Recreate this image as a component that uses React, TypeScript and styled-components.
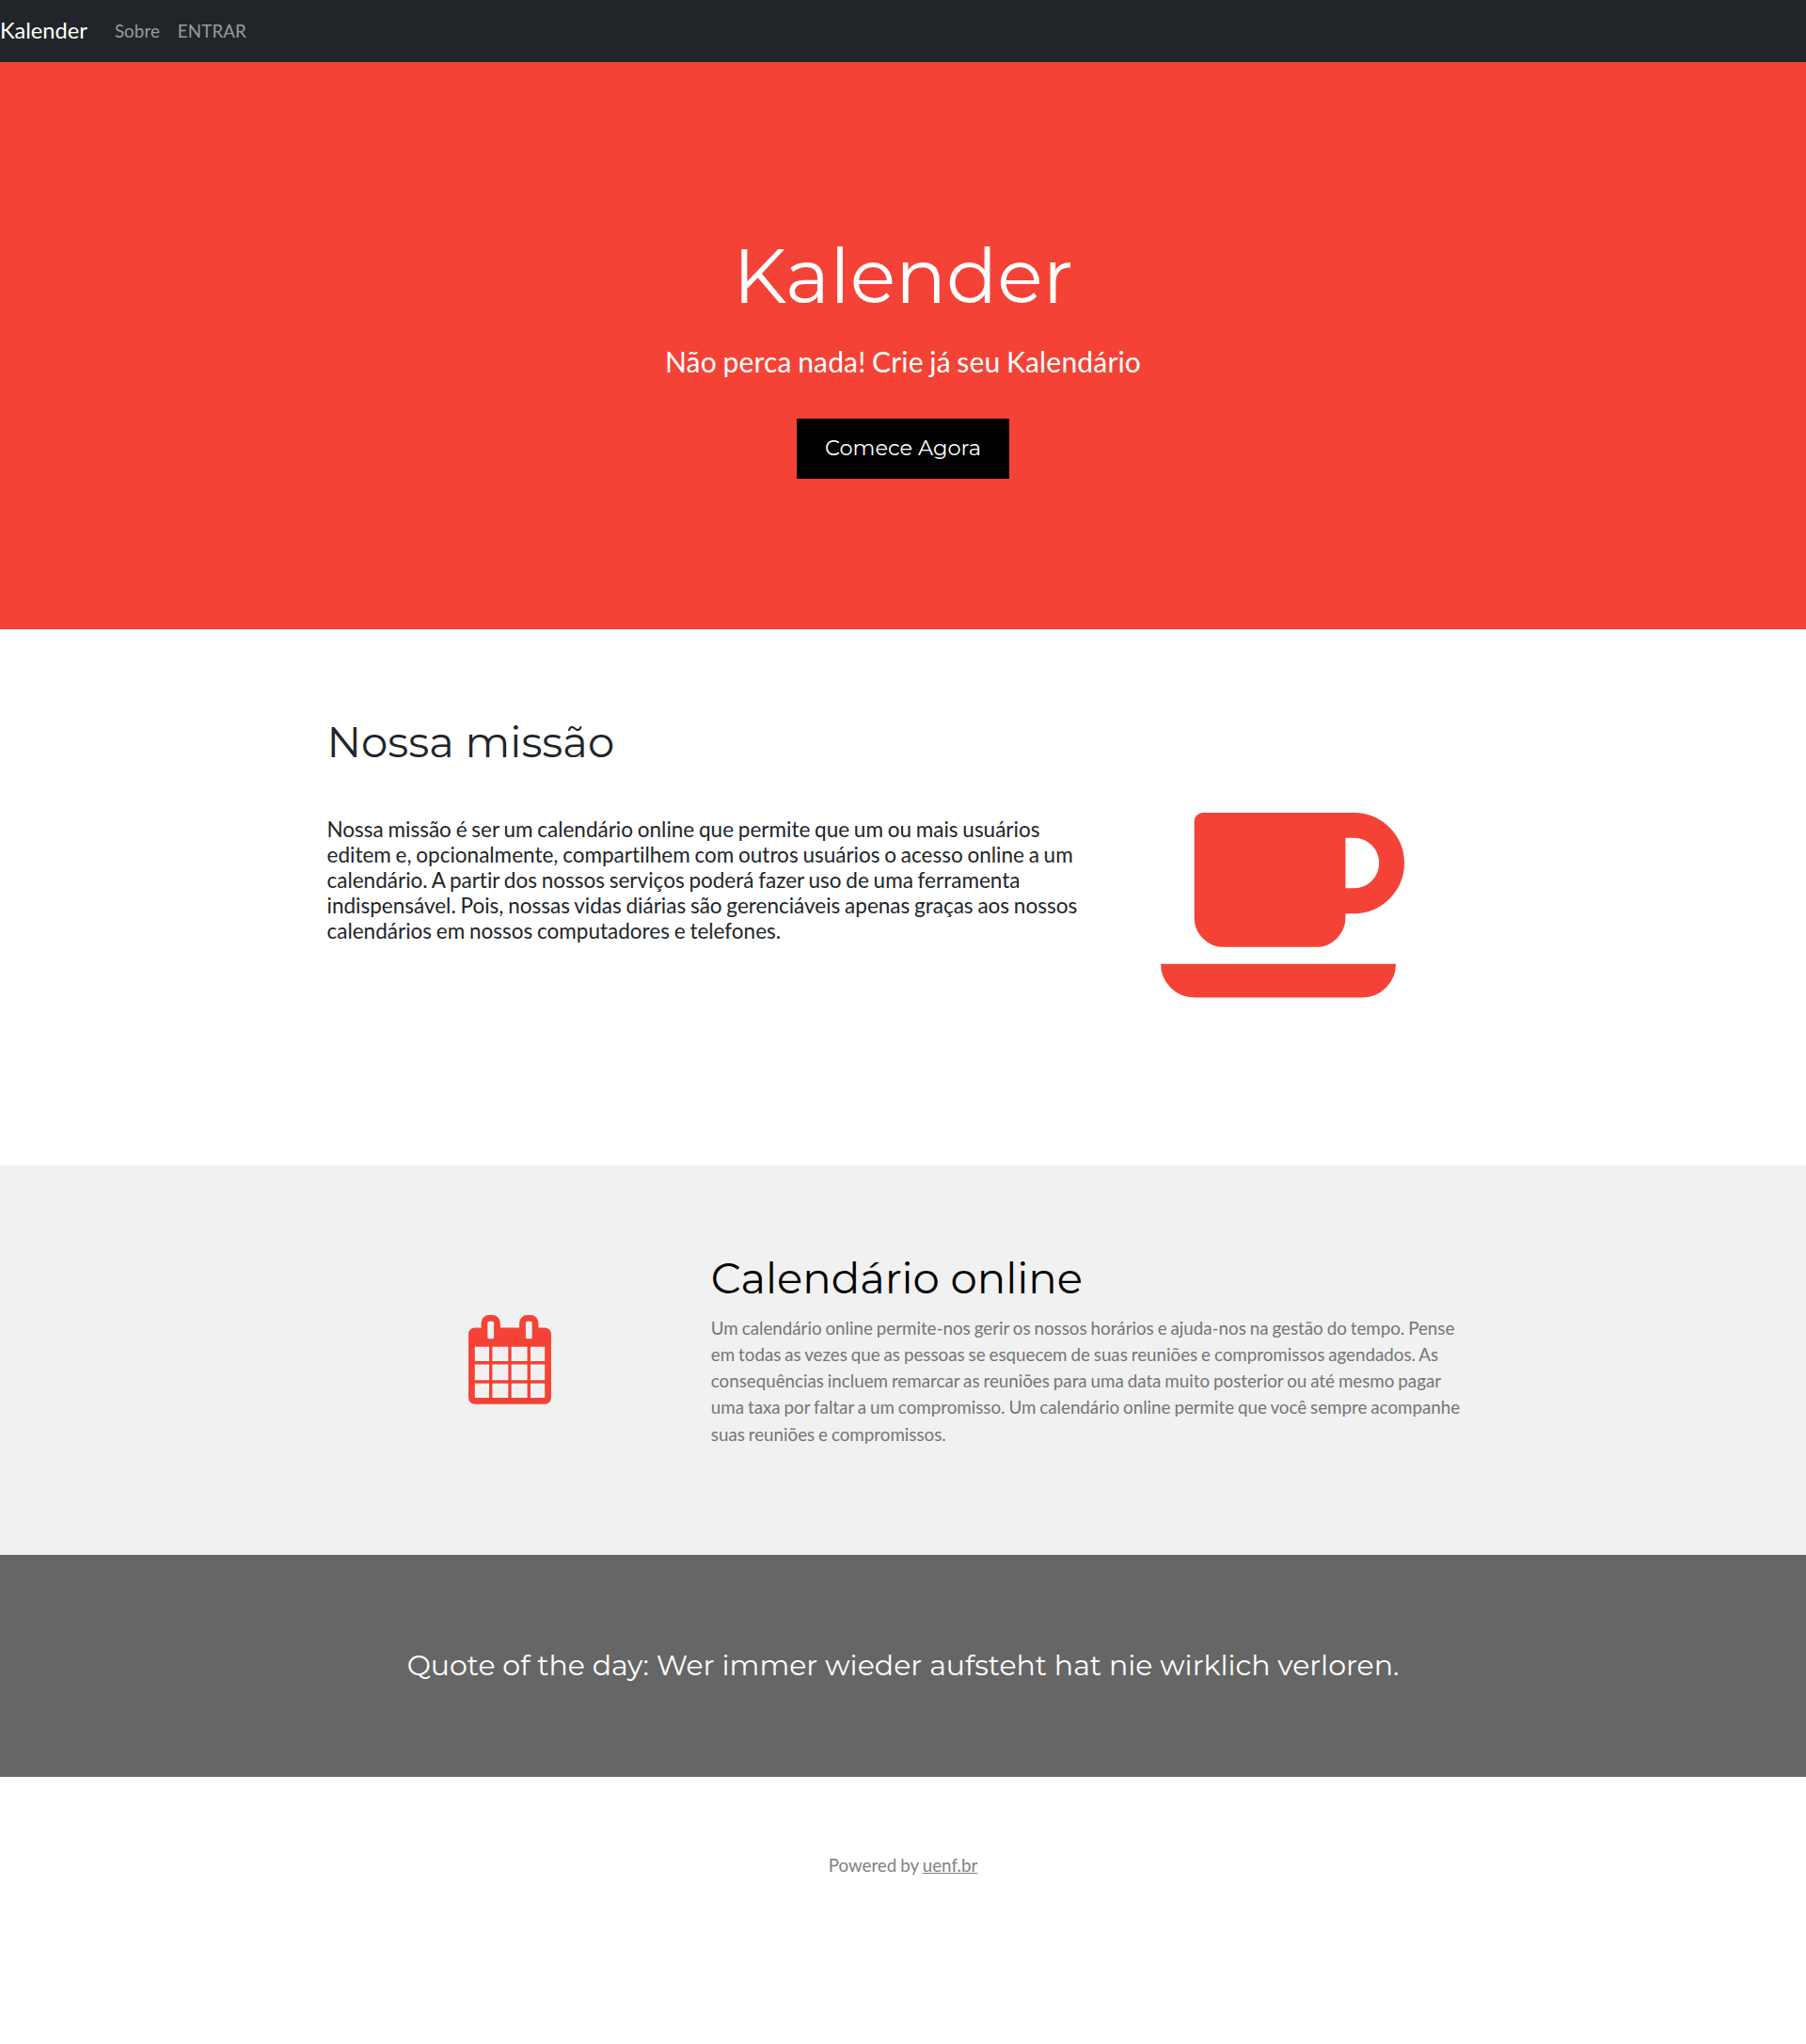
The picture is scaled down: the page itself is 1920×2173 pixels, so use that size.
import React from "react";
import styled, { createGlobalStyle } from "styled-components";

const lato = `Lato, "Open Sans", sans-serif`;
const montserrat = `Montserrat, Inter, sans-serif`;
const red = "#f44336";

const GlobalStyle = createGlobalStyle`
  *, *::before, *::after { box-sizing: border-box; }
  body {
    margin: 0;
    background: #fff;
    color: #212529;
    font-family: ${lato};
    font-size: 18.75px;
    line-height: 1.5;
    font-variant-ligatures: none;
  }
  h1, h5, p { margin: 0; font-weight: 400; }
`;

const Navbar = styled.nav`
  display: flex;
  align-items: center;
  height: 65.6px;
  background: #212529;
`;

const Brand = styled.a`
  margin-right: 18.75px;
  color: #fff;
  font-size: 23.6px;
  line-height: 35px;
  text-decoration: none;
`;

const NavLinks = styled.div`
  display: flex;
  padding-left: 1px;
`;

const NavLink = styled.a`
  padding: 0 9.375px;
  color: rgba(255, 255, 255, 0.55);
  letter-spacing: 0.12px;
  text-decoration: none;
`;

const Hero = styled.header`
  display: flex;
  flex-direction: column;
  align-items: center;
  height: 603.5px;
  padding: 160px 20px;
  background: ${red};
  color: #fff;
  text-align: center;
`;

const HeroTitle = styled.h1`
  margin: 20px;
  font-family: ${montserrat};
  font-size: 80px;
  line-height: 1.2;
`;

const Tagline = styled.p`
  margin-bottom: 38.75px;
  font-size: 30px;
  letter-spacing: 0.18px;
  word-spacing: -0.042em;
`;

const StartButton = styled.button`
  padding: 15px 30px;
  border: 0;
  background: #000;
  color: #fff;
  font-family: ${montserrat};
  font-size: 22.5px;
  line-height: 33.75px;
  cursor: pointer;
`;

const Section = styled.section<{ $height: number; $shaded?: boolean }>`
  height: ${(p) => p.$height}px;
  padding: 80px 20px;
  background: ${(p) => (p.$shaded ? "#f1f1f1" : "#fff")};
`;

const Content = styled.div<{ $columns: string }>`
  display: grid;
  grid-template-columns: ${(p) => p.$columns};
  width: 1225px;
  margin: 0 auto;
`;

const Heading = styled.h1<{ $color?: string }>`
  margin: 12.5px 0;
  color: ${(p) => p.$color ?? "inherit"};
  font-family: ${montserrat};
  font-size: 45px;
  line-height: 1.2;
`;

const Mission = styled.h5`
  padding: 40px 14px 40px 0;
  font-size: 22.5px;
  line-height: 1.2;
  word-spacing: -0.044em;
`;

const Muted = styled.p`
  padding-right: 14px;
  color: #757575;
  word-spacing: -0.046em;
`;

const IconColumn = styled.div<{ $top: number; $right?: number }>`
  display: flex;
  justify-content: center;
  align-items: flex-start;
  padding: ${(p) => p.$top}px ${(p) => p.$right ?? 0}px 0 0;
`;

const Quote = styled.section`
  height: 236px;
  padding: 100px 20px;
  background: #666;
  color: #fff;
  text-align: center;
`;

const QuoteText = styled.h1`
  font-family: ${montserrat};
  font-size: 30px;
  line-height: 1.2;
`;

const Footer = styled.footer`
  height: 284px;
  padding: 80px 20px;
  color: #808285;
  text-align: center;
  word-spacing: -0.042em;
`;

const FooterLink = styled.a`
  color: inherit;
  text-decoration: underline;
`;

const CoffeeIcon = () => (
  <svg width="267.9" height="250" viewBox="0 -251 1920 1792" fill={red} aria-hidden="true">
    <path d="M1664 384q0-80-56-136t-136-56h-64v384h64q80 0 136-56t56-136zM0 1152h1792q0 106-75 181t-181 75H256q-106 0-181-75T0 1152zM1856 384q0 159-112.500 271.500T1472 768h-64v32q0 92-66 158t-158 66H480q-92 0-158-66t-66-158V64q0-26 19-45t45-19h1152q159 0 271.500 112.500T1856 384z" />
  </svg>
);

const CalendarIcon = () => (
  <svg width="88" height="94.7" viewBox="64 0 1664 1792" fill={red} aria-hidden="true">
    <path d="M192 1664h288v-288h-288v288zm352 0h320v-288h-320v288zm-352-352h288v-320h-288v320zm352 0h320v-320h-320v320zm-352-384h288v-288h-288v288zm736 736h320v-288h-320v288zm-384-736h320v-288h-320v288zm768 736h288v-288h-288v288zm-384-352h320v-320h-320v320zm-352-864v-288q0-13-9.500-22.500t-22.500-9.500h-64q-13 0-22.500 9.500t-9.500 22.500v288q0 13 9.500 22.500t22.500 9.500h64q13 0 22.500-9.500t9.500-22.500zm736 864h288v-320h-288v320zm-384-384h320v-288h-320v288zm384 0h288v-288h-288v288zm32-480v-288q0-13-9.500-22.500t-22.500-9.500h-64q-13 0-22.500 9.500t-9.500 22.500v288q0 13 9.500 22.500t22.500 9.500h64q13 0 22.500-9.500t9.500-22.500zm384-64v1280q0 52-38 90t-90 38h-1408q-52 0-90-38t-38-90v-1280q0-52 38-90t90-38h128v-96q0-66 47-113t113-47h64q66 0 113 47t47 113v96h384v-96q0-66 47-113t113-47h64q66 0 113 47t47 113v96h128q52 0 90 38t38 90z" />
  </svg>
);

export default function App() {
  return (
    <>
      <GlobalStyle />
      <Navbar>
        <Brand href="#">Kalender</Brand>
        <NavLinks>
          <NavLink href="#">Sobre</NavLink>
          <NavLink href="#">ENTRAR</NavLink>
        </NavLinks>
      </Navbar>

      <Hero>
        <HeroTitle>Kalender</HeroTitle>
        <Tagline>Não perca nada! Crie já seu Kalendário</Tagline>
        <StartButton>Comece Agora</StartButton>
      </Hero>

      <Section $height={570}>
        <Content $columns="2fr 1fr">
          <div>
            <Heading>Nossa missão</Heading>
            <Mission>
              Nossa missão é ser um calendário online que permite que um ou mais usuários
              editem e, opcionalmente, compartilhem com outros usuários o acesso online a um
              calendário. A partir dos nossos serviços poderá fazer uso de uma ferramenta
              indispensável. Pois, nossas vidas diárias são gerenciáveis apenas graças aos nossos
              calendários em nossos computadores e telefones.
            </Mission>
          </div>
          <IconColumn $top={80}>
            <CoffeeIcon />
          </IconColumn>
        </Content>
      </Section>

      <Section $height={414} $shaded>
        <Content $columns="1fr 2fr">
          <IconColumn $top={79} $right={20}>
            <CalendarIcon />
          </IconColumn>
          <div>
            <Heading $color="#000">Calendário online</Heading>
            <Muted>
              Um calendário online permite-nos gerir os nossos horários e ajuda-nos na gestão do
              tempo. Pense em todas as vezes que as pessoas se esquecem de suas reuniões e
              compromissos agendados. As consequências incluem remarcar as reuniões para uma data
              muito posterior ou até mesmo pagar uma taxa por faltar a um compromisso. Um
              calendário online permite que você sempre acompanhe suas reuniões e compromissos.
            </Muted>
          </div>
        </Content>
      </Section>

      <Quote>
        <QuoteText>Quote of the day: Wer immer wieder aufsteht hat nie wirklich verloren.</QuoteText>
      </Quote>

      <Footer>
        <p>
          Powered by <FooterLink href="#">uenf.br</FooterLink>
        </p>
      </Footer>
    </>
  );
}
